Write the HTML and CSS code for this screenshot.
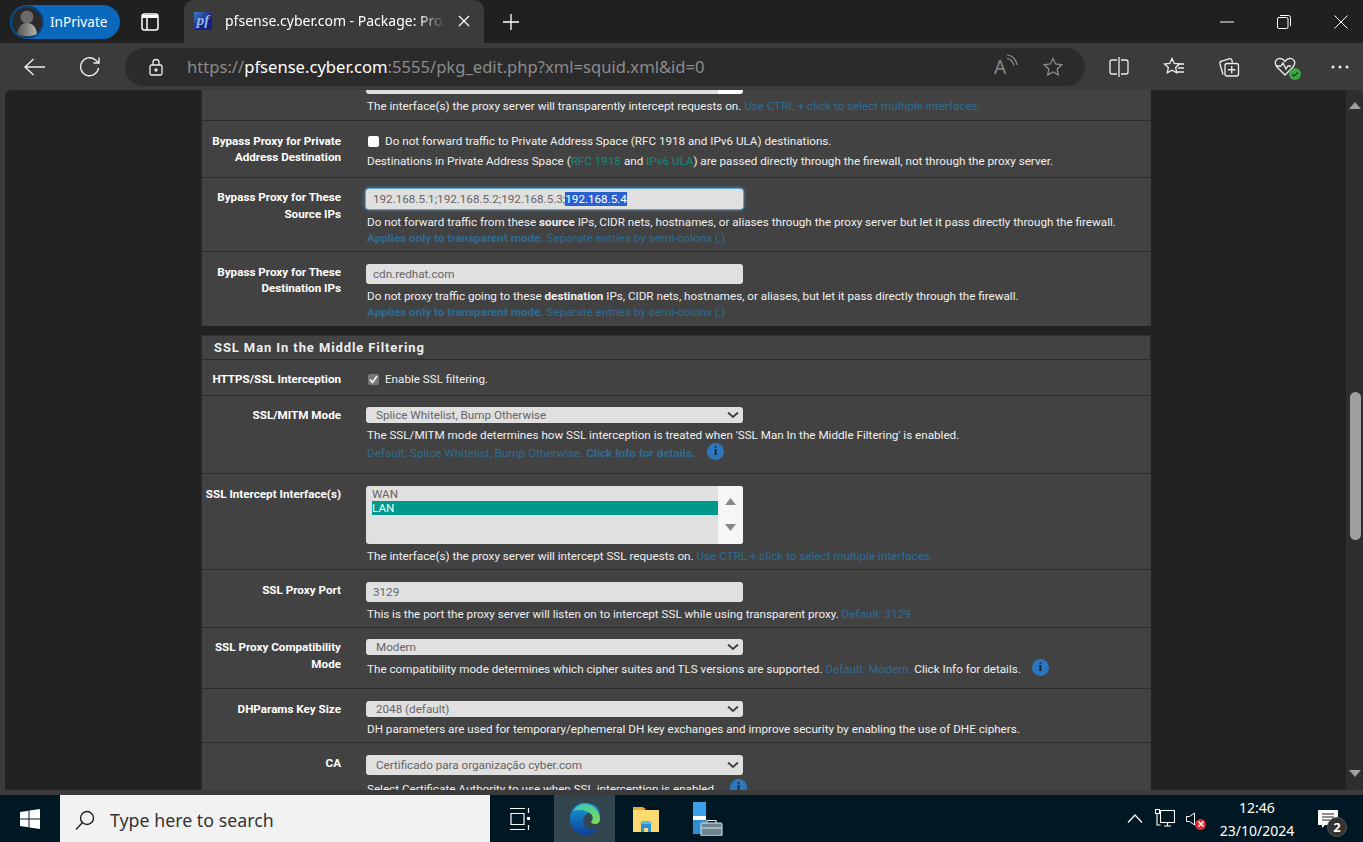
FILE: index.html
```html
<!DOCTYPE html>
<html lang="en">
<head>
  <meta charset="UTF-8" />
  <title>pfsense.cyber.com - Package: Proxy Server</title>
  <link rel="stylesheet" href="styles.css">
</head>
<body>
  <!-- browser tab strip -->
  <div class="tabbar">
    <div class="profile">
      <svg class="avatar" width="34" height="34" viewBox="0 0 34 34">
        <defs>
          <linearGradient id="avatarBody" x1="0" y1="0" x2="1" y2="0"><stop offset="0" stop-color="#55534e"/><stop offset="1" stop-color="#b5b3ac"/></linearGradient>
        </defs>
        <circle cx="17" cy="17" r="15.5" fill="#2a2a2a" stroke="#0a3f70" stroke-width="2"/>
        <circle cx="17" cy="12" r="6.500" fill="#6a6a6a"/>
        <path d="M7 29c1-7 4-11 10-11s9 4 10 11c-6 3-14 3-20 0z" fill="url(#avatarBody)"/>
      </svg>
      <span>InPrivate</span>
    </div>
    <svg class="tabs-icon" width="18" height="18" viewBox="0 0 18 18" fill="none" stroke="#fff" stroke-width="1.5"><rect x="1" y="1" width="16" height="16" rx="2.5"/><path d="M6 5v12"/><path d="M1 2h16v3H1z" fill="#fff" stroke="none"/></svg>
    <div class="tab">
      <div class="favicon">pf</div>
      <span class="tab-title">pfsense.cyber.com - Package: Proxy Server</span>
      <svg width="12" height="12" viewBox="0 0 12 12" stroke="#fff" stroke-width="1.2"><path d="M1 1l10 10M11 1L1 11"/></svg>
    </div>
    <svg class="new-tab" width="18" height="18" viewBox="0 0 18 18" stroke="#fff" stroke-width="1.3"><path d="M9 1v16M1 9h16"/></svg>
    <div class="window-controls">
      <svg width="14" height="14" viewBox="0 0 14 14" stroke="#fff" stroke-width="1"><path d="M0 7h14"/></svg>
      <svg width="14" height="14" viewBox="0 0 14 14" fill="none" stroke="#fff" stroke-width="1"><rect x=".5" y="2.5" width="10.5" height="11" rx="1.5"/><path d="M3 .5h8.5a2 2 0 0 1 2 2V11"/></svg>
      <svg width="14" height="14" viewBox="0 0 14 14" stroke="#fff" stroke-width="1"><path d="M.5.5l13 13M13.5.5l-13 13"/></svg>
    </div>
  </div>

  <!-- address bar -->
  <div class="toolbar">
    <svg class="nav-back" width="22" height="18" viewBox="0 0 22 18" fill="none" stroke="#eee" stroke-width="1.4"><path d="M21 9H1M9.5 1L1 9l8.5 8"/></svg>
    <svg class="nav-reload" width="22" height="22" viewBox="0 0 22 22" fill="none" stroke="#eee" stroke-width="1.4"><path d="M19.5 12a9 9 0 1 1-3-8L20 7"/><path d="M20 1.5V7h-5.5"/></svg>
    <div class="address">
      <svg width="14" height="18" viewBox="0 0 14 18" fill="none" stroke="#eee" stroke-width="1.3"><rect x="1" y="7" width="12" height="10" rx="1.5"/><path d="M4 7V4.5a3 3 0 0 1 6 0V7"/><circle cx="7" cy="12" r="1" fill="#eee"/></svg>
      <div class="url">https://<b>pfsense.cyber.com</b>:5555/pkg_edit.php?xml=squid.xml&amp;id=0</div>
      <div class="read-aloud">A<svg width="12" height="14" viewBox="0 0 12 14" fill="none" stroke="#8a8a8a" stroke-width="1.2"><path d="M1 1c5 0 9 4 10 10M1 4.500c3 0 6 3 7 7"/></svg></div>
      <svg width="20" height="20" viewBox="0 0 20 20" fill="none" stroke="#8a8a8a" stroke-width="1.3"><path d="M10 1.500l2.600 5.500 6 .8-4.400 4.100 1.100 6L10 15l-5.300 2.900 1.100-6L1.400 7.800l6-.8z"/></svg>
    </div>
    <div class="tools">
      <svg width="20" height="20" viewBox="0 0 20 20" fill="none" stroke="#eee" stroke-width="1.3"><path d="M8 3H3a2 2 0 0 0-2 2v10a2 2 0 0 0 2 2h5M12 3h5a2 2 0 0 1 2 2v10a2 2 0 0 1-2 2h-5M10 0v20"/></svg>
      <svg width="22" height="20" viewBox="0 0 22 20" fill="none" stroke="#eee" stroke-width="1.3"><path d="M9 1.500l2.300 5 5.200.6-3.800 3.500 1 5.200L9 13.300l-4.700 2.500 1-5.200L1.500 7.100l5.200-.6z"/><path d="M15 7h6M15 11h6M13 15h8"/></svg>
      <svg width="22" height="20" viewBox="0 0 22 20" fill="none" stroke="#eee" stroke-width="1.3"><path d="M5 17.500L2 7a2.500 2.500 0 0 1 1.800-3L11 1.800a2.500 2.500 0 0 1 3 1.700l.5 2"/><rect x="7" y="6.500" width="13.500" height="12.500" rx="2"/><path d="M13.750 9v7.500M10 12.750h7.500"/></svg>
      <div class="health">
        <svg width="22" height="20" viewBox="0 0 22 20" fill="none" stroke="#eee" stroke-width="1.3"><path d="M11 18L3 10C-1 5 3 1 6.500 1.500 9 1.800 10 3 11 4.500 12 3 13 1.800 15.500 1.500 19 1 23 5 19 10z"/><path d="M2 9h5l2-3 3 6 2-3h3"/></svg>
        <svg class="health-ok" width="12" height="12" viewBox="0 0 12 12"><circle cx="6" cy="6" r="6" fill="#3fa648"/><path d="M3 6.200l2 2 4-4" fill="none" stroke="#1d3a20" stroke-width="1.300"/></svg>
      </div>
      <svg width="18" height="4" viewBox="0 0 18 4" fill="#eee"><circle cx="2" cy="2" r="1.500"/><circle cx="9" cy="2" r="1.500"/><circle cx="16" cy="2" r="1.500"/></svg>
    </div>
  </div>

  <!-- page content -->
  <div class="viewport">
    <div class="page">
      <div class="panel">
        <div class="row row-top">
          <div class="label"></div>
          <div class="field">
            <div class="list-stub"></div>
            <p class="help">The interface(s) the proxy server will transparently intercept requests on. <span class="muted">Use CTRL + click to select multiple interfaces.</span></p>
          </div>
        </div>
        <div class="row row-private">
          <div class="label">Bypass Proxy for Private Address Destination</div>
          <div class="field">
            <label class="check"><span class="box"></span>Do not forward traffic to Private Address Space (RFC 1918 and IPv6 ULA) destinations.</label>
            <p class="help">Destinations in Private Address Space (<span class="teal">RFC 1918</span> and <span class="teal">IPv6 ULA</span>) are passed directly through the firewall, not through the proxy server.</p>
          </div>
        </div>
        <div class="row row-source">
          <div class="label">Bypass Proxy for These Source IPs</div>
          <div class="field">
            <div class="input focused">192.168.5.1;192.168.5.2;192.168.5.3;<span class="selected">192.168.5.4</span></div>
            <p class="help">Do not forward traffic from these <b>source</b> IPs, CIDR nets, hostnames, or aliases through the proxy server but let it pass directly through the firewall.<br><span class="muted"><b>Applies only to transparent mode.</b> Separate entries by semi-colons (;)</span></p>
          </div>
        </div>
        <div class="row row-dest">
          <div class="label">Bypass Proxy for These Destination IPs</div>
          <div class="field">
            <div class="input">cdn.redhat.com</div>
            <p class="help">Do not proxy traffic going to these <b>destination</b> IPs, CIDR nets, hostnames, or aliases, but let it pass directly through the firewall.<br><span class="muted"><b>Applies only to transparent mode.</b> Separate entries by semi-colons (;)</span></p>
          </div>
        </div>
      </div>

      <div class="panel panel-ssl">
        <h2>SSL Man In the Middle Filtering</h2>
        <div class="row row-https">
          <div class="label">HTTPS/SSL Interception</div>
          <div class="field">
            <label class="check"><span class="box checked"><svg width="9" height="9" viewBox="0 0 9 9" fill="none" stroke="#fff" stroke-width="1.500"><path d="M1 4.500l2.500 3L8 1"/></svg></span>Enable SSL filtering.</label>
          </div>
        </div>
        <div class="row row-mode">
          <div class="label">SSL/MITM Mode</div>
          <div class="field">
            <div class="select">Splice Whitelist, Bump Otherwise<svg width="12" height="8" viewBox="0 0 12 8" fill="none" stroke="#444" stroke-width="2"><path d="M1 1.500l5 4.500 5-4.500"/></svg></div>
            <p class="help">The SSL/MITM mode determines how SSL interception is treated when 'SSL Man In the Middle Filtering' is enabled.<br><span class="muted">Default: Splice Whitelist, Bump Otherwise. <b>Click Info for details.</b></span><span class="info info-mode">i</span></p>
          </div>
        </div>
        <div class="row row-iface">
          <div class="label">SSL Intercept Interface(s)</div>
          <div class="field">
            <div class="listbox">
              <div class="options">
                <div>WAN</div>
                <div class="picked">LAN</div>
              </div>
              <div class="list-scroll">
                <svg width="11" height="7" viewBox="0 0 11 7" fill="#888"><path d="M5.500 0l5.500 7H0z"/></svg>
                <svg width="11" height="7" viewBox="0 0 11 7" fill="#888"><path d="M5.500 7L0 0h11z"/></svg>
              </div>
            </div>
            <p class="help">The interface(s) the proxy server will intercept SSL requests on. <span class="muted">Use CTRL + click to select multiple interfaces.</span></p>
          </div>
        </div>
        <div class="row row-port">
          <div class="label">SSL Proxy Port</div>
          <div class="field">
            <div class="input">3129</div>
            <p class="help">This is the port the proxy server will listen on to intercept SSL while using transparent proxy. <span class="muted">Default: 3129</span></p>
          </div>
        </div>
        <div class="row row-compat">
          <div class="label">SSL Proxy Compatibility Mode</div>
          <div class="field">
            <div class="select">Modern<svg width="12" height="8" viewBox="0 0 12 8" fill="none" stroke="#444" stroke-width="2"><path d="M1 1.500l5 4.500 5-4.500"/></svg></div>
            <p class="help">The compatibility mode determines which cipher suites and TLS versions are supported. <span class="muted">Default: Modern.</span> Click Info for details.<span class="info info-compat">i</span></p>
          </div>
        </div>
        <div class="row row-dh">
          <div class="label">DHParams Key Size</div>
          <div class="field">
            <div class="select">2048 (default)<svg width="12" height="8" viewBox="0 0 12 8" fill="none" stroke="#444" stroke-width="2"><path d="M1 1.500l5 4.500 5-4.500"/></svg></div>
            <p class="help">DH parameters are used for temporary/ephemeral DH key exchanges and improve security by enabling the use of DHE ciphers.</p>
          </div>
        </div>
        <div class="row row-ca">
          <div class="label">CA</div>
          <div class="field">
            <div class="select select-tall">Certificado para organização cyber.com<svg width="12" height="8" viewBox="0 0 12 8" fill="none" stroke="#444" stroke-width="2"><path d="M1 1.500l5 4.500 5-4.500"/></svg></div>
            <p class="help">Select Certificate Authority to use when SSL interception is enabled.<span class="info info-ca">i</span></p>
          </div>
        </div>
      </div>
    </div>

    <div class="scrollbar">
      <svg class="arrow-up" width="12" height="7" viewBox="0 0 12 7" fill="#9f9f9f"><path d="M6 0l6 7H0z"/></svg>
      <div class="thumb"></div>
      <svg class="arrow-down" width="12" height="7" viewBox="0 0 12 7" fill="#9f9f9f"><path d="M6 7L0 0h12z"/></svg>
    </div>
  </div>
  <div class="strip"></div>

  <!-- windows taskbar -->
  <div class="taskbar">
    <div class="start">
      <svg width="20" height="20" viewBox="0 0 20 20" fill="#fff"><path d="M0 3l8.500-1.200v7.700H0zM9.500 1.600L20 0v9.500H9.500zM0 10.500h8.500v7.700L0 17zM9.500 10.500H20V20L9.500 18.400z"/></svg>
    </div>
    <div class="search">
      <svg width="20" height="20" viewBox="0 0 20 20" fill="none" stroke="#222" stroke-width="1.400"><circle cx="12" cy="8" r="6.500"/><path d="M7.500 12.500L1 19.500"/></svg>
      <span>Type here to search</span>
    </div>
    <div class="task task-view">
      <svg width="20" height="26" viewBox="0 0 20 26" fill="none" stroke="#fff" stroke-width="1.200"><path d="M0 2.500h15M0 23.500h15M1 7.500h13v11H1zM18.500 2v5M18.500 19v5"/><path d="M18.500 11v3" stroke-width="3"/></svg>
    </div>
    <div class="task task-edge">
      <svg width="32" height="34" viewBox="0 0 32 34">
        <defs>
          <linearGradient id="edgeBlue" x1="0" y1="0" x2="0" y2="1"><stop offset="0" stop-color="#1aa0d8"/><stop offset="1" stop-color="#0b3f9a"/></linearGradient>
          <linearGradient id="edgeGreen" x1="0" y1="0" x2="1" y2="1"><stop offset="0" stop-color="#35c6c0"/><stop offset="1" stop-color="#7fdc55"/></linearGradient>
        </defs>
        <path d="M16 1C7 1 1 8 1 17c0 9 7 16 15 16 6 0 11-3 14-7-5 3-13 2-15-4-2-5 0-9 5-11 5-1 9 2 11 5 1-10-6-15-15-15z" fill="url(#edgeBlue)"/>
        <path d="M4 9c4-7 13-9 19-5 5 3 8 8 8 13 0 3-2 5-5 5-2 0-4-1-4-2 3-3 2-8-3-10C13 7 7 8 4 9z" fill="url(#edgeGreen)"/>
      </svg>
    </div>
    <div class="task task-files">
      <svg width="28" height="28" viewBox="0 0 28 28"><path d="M1 2h10l3 4h-13z" fill="#e8a93a"/><path d="M1 5h26v22H1z" fill="#fcd971"/><path d="M1 5h11l2-2" fill="#e8a93a"/><path d="M9 27v-8h10v8h-3v-4h-4v4z" fill="#2f8fd0"/><path d="M8 19l2-3h8l2 3z" fill="#5fb6e8"/></svg>
    </div>
    <div class="task task-admin">
      <svg width="31" height="34" viewBox="0 0 31 34"><rect x="1" y="0" width="13" height="14" fill="#3aa0e8"/><rect x="1" y="14" width="13" height="4" fill="#fff"/><rect x="1" y="18" width="13" height="14" fill="#2f8fd0"/><rect x="9" y="21" width="21" height="13" rx="1" fill="#6f8692" stroke="#dfe7ec"/><path d="M15 21v-2.500h9V21" fill="none" stroke="#dfe7ec" stroke-width="1.200"/><path d="M10 26h19" stroke="#dfe7ec"/></svg>
    </div>
    <div class="tray">
      <svg width="16" height="9" viewBox="0 0 16 9" fill="none" stroke="#fff" stroke-width="1.200"><path d="M1 8.500L8 1l7 7.500"/></svg>
      <svg class="tray-net" width="20" height="20" viewBox="0 0 20 20" fill="none" stroke="#fff" stroke-width="1.100"><rect x="5.500" y="1.500" width="14" height="12"/><path d="M9 17h7M12.500 13.500V17M2 3.500V16h3.500"/><rect x=".5" y=".5" width="4" height="4" fill="#001823"/></svg>
      <div class="volume">
        <svg width="10" height="14" viewBox="0 0 10 14" fill="none" stroke="#fff" stroke-width="1"><path d="M.5 4.500h3L8.500 1v12l-5-3.500h-3z"/></svg>
        <span class="mute-x">
          <svg width="10" height="10" viewBox="0 0 10 10" stroke="#fff" stroke-width="1.500"><path d="M2.500 2.500l5 5M7.500 2.500l-5 5"/></svg>
        </span>
      </div>
      <div class="clock"><div>12:46</div><div>23/10/2024</div></div>
      <div class="notify">
        <svg width="20" height="18" viewBox="0 0 20 18" fill="#fff"><path d="M0 0h20v15H7l-3 3v-3H0z"/><path d="M4 4h12M4 7h12M4 10h8" stroke="#222" stroke-width="1"/></svg>
        <span class="badge">2</span>
      </div>
    </div>
  </div>
</body>
</html>
```

FILE: styles.css
```css
* {
  box-sizing: border-box;
}

html, body {
  margin: 0;
  height: 100%;
  overflow: hidden;
}

body {
  display: flex;
  flex-direction: column;
  height: 100vh;
  background: #3b3b3b;
  font-family: Roboto, "Liberation Sans", sans-serif;
  font-size: 11.66px;
  color: #f0f0f0;
}

/* tab strip */
.tabbar {
  height: 43px;
  flex: none;
  display: flex;
  align-items: center;
  background: #202020;
  color: #fff;
  font-family: "Noto Sans", sans-serif;
}

.profile {
  width: 110px;
  height: 34px;
  margin-left: 10px;
  display: flex;
  align-items: center;
  gap: 6px;
  background: #0a68bd;
  border-radius: 17px;
  font-size: 13.6px;
}

.tabs-icon {
  margin-left: 21px;
}

.tab {
  width: 300px;
  height: 43px;
  margin: 0 0 0 25px;
  padding: 0 14px 2px 10px;
  display: flex;
  align-items: center;
  gap: 13px;
  background: #3b3b3b;
  border-radius: 10px 10px 0 0;
  font-size: 14px;
}

.favicon {
  width: 18px;
  height: 18px;
  flex: none;
  background: linear-gradient(135deg, #3f7fc0, #1a1f80 60%);
  color: #8fb8e8;
  font: italic bold 15px/16px "Liberation Serif", serif;
  text-align: center;
}

.tab-title {
  flex: 1;
  white-space: nowrap;
  overflow: hidden;
  -webkit-mask-image: linear-gradient(to right, #000 88%, transparent);
  mask-image: linear-gradient(to right, #000 88%, transparent);
}

.new-tab {
  margin-left: 18px;
}

.window-controls {
  margin-left: auto;
  display: flex;
  gap: 43px;
  padding-right: 15px;
}

/* address bar */
.toolbar {
  height: 47px;
  flex: none;
  display: flex;
  align-items: center;
  background: #3b3b3b;
}

.nav-back {
  margin-left: 24px;
}

.nav-reload {
  margin-left: 33px;
}

.address {
  width: 960px;
  height: 38px;
  margin-left: 24px;
  padding: 0 22px 0 24px;
  display: flex;
  align-items: center;
  background: #2b2b2b;
  border-radius: 19px;
}

.url {
  flex: 1;
  margin-left: 24px;
  font-family: "Noto Sans", sans-serif;
  font-size: 16.6px;
  color: #8c8c8c;
  white-space: nowrap;
}

.url b {
  font-weight: 400;
  color: #fff;
}

.read-aloud {
  width: 28px;
  margin-right: 21px;
  display: flex;
  font: 400 19px "Noto Sans", sans-serif;
  color: #8a8a8a;
}

.tools {
  flex: 1;
  display: flex;
  align-items: center;
  padding: 0 14px 0 24px;
  justify-content: space-between;
}

.health {
  position: relative;
  display: flex;
  margin-right: 2px;
}

.health-ok {
  position: absolute;
  right: -5px;
  bottom: -3px;
}

/* page */
.viewport {
  flex: 1;
  min-height: 0;
  margin-left: 5px;
  display: flex;
  background: #222;
  border-radius: 6px 6px 0 0;
  overflow: hidden;
}

.page {
  flex: 1;
  overflow: hidden;
  padding-left: 196px;
  padding-right: 195px;
}

.panel {
  background: #424242;
}

.panel-ssl {
  margin-top: 9px;
}

.panel h2 {
  margin: 0;
  height: 25px;
  padding-left: 12px;
  border: 1px solid #2b2b2b;
  border-top-color: #333;
  font-size: 13px;
  line-height: 24px;
  font-weight: 700;
  letter-spacing: 0.9px;
  color: #eee;
}

.row {
  display: grid;
  grid-template-columns: 139px 1fr;
  column-gap: 25px;
  padding-top: 11px;
  border-bottom: 1px solid #2b2b2b;
  border-left: 1px solid #2b2b2b;
}

.row-top { height: 31px; padding-top: 0; }
.row-private { height: 57px; padding-top: 12px; }
.row-source { height: 74px; }
.row-dest { height: 74px; padding-top: 12px; border-bottom: 0; }
.row-https { height: 36px; }
.row-mode { height: 78px; }
.row-iface { height: 96px; padding-top: 12px; }
.row-port { height: 58px; padding-top: 12px; }
.row-compat { height: 61px; }
.row-dh { height: 54px; padding-top: 12px; }
.row-ca { height: 60px; padding-top: 12px; border-bottom: 0; }

.label {
  font-weight: 700;
  line-height: 16px;
  text-align: right;
  color: #fff;
}

.row-source .label,
.row-compat .label {
  line-height: 17px;
}

.help {
  margin: 4px 0 0;
  padding-left: 1px;
  line-height: 16px;
  white-space: nowrap;
}

.row-source .help {
  margin-top: 5px;
}

.muted {
  color: #2e6d94;
}

.teal {
  color: #0f8a7c;
}

.check {
  display: flex;
  align-items: center;
  gap: 6px;
  line-height: 16px;
}

.box {
  width: 11px;
  height: 11px;
  margin-left: 2px;
  display: flex;
  align-items: center;
  justify-content: center;
  background: #fff;
  border-radius: 2px;
}

.box.checked {
  background: #777;
}

.input, .select, .listbox, .list-stub {
  width: 377px;
  background: #e0e0e0;
  border-radius: 3px;
  color: #666;
}

.input {
  height: 20px;
  padding-left: 7px;
  line-height: 20px;
}

.focused {
  box-shadow: 0 0 0 1px #5da5d8, 0 0 5px #5da5d8;
}

.selected {
  background: #2a5fd0;
  color: #fff;
}

.select {
  height: 16px;
  padding: 0 4px 0 10px;
  display: flex;
  align-items: center;
  justify-content: space-between;
}

.select-tall {
  height: 20px;
}

.list-stub {
  height: 4px;
  border-radius: 0 0 3px 3px;
  background: linear-gradient(to right, #e0e0e0 352px, #fff 352px);
}

.listbox {
  height: 58px;
  display: flex;
  overflow: hidden;
  line-height: 14px;
}

.options {
  flex: 1;
  padding: 1px 0 0 6px;
}

.picked {
  background: #00988a;
  color: #fff;
}

.list-scroll {
  width: 25px;
  padding: 12px 0 13px;
  display: flex;
  flex-direction: column;
  align-items: center;
  justify-content: space-between;
  background: #f6f6f6;
}

.info {
  display: inline-block;
  width: 17px;
  height: 17px;
  vertical-align: 2px;
  border-radius: 50%;
  background: #2a77c0;
  color: #222;
  font: 700 12px/17px "Liberation Serif", serif;
  text-align: center;
}

.info-mode { margin-left: 12px; }
.info-compat { margin-left: 11px; }
.info-ca { margin-left: 13px; }

/* browser scrollbar */
.scrollbar {
  position: relative;
  width: 17px;
  flex: none;
  background: #2e2e2e;
}

.arrow-up {
  position: absolute;
  top: 12px;
  left: 3px;
}

.arrow-down {
  position: absolute;
  bottom: 13px;
  left: 3px;
}

.thumb {
  position: absolute;
  top: 302px;
  left: 4px;
  width: 11px;
  height: 148px;
  background: #9f9f9f;
  border-radius: 6px;
}

.strip {
  height: 5px;
  flex: none;
  background: #3b3b3b;
}

/* taskbar */
.taskbar {
  height: 47px;
  flex: none;
  display: flex;
  align-items: center;
  background: #001823;
  color: #fff;
  font-family: "Noto Sans", sans-serif;
}

.start {
  width: 60px;
  flex: none;
  display: flex;
  justify-content: center;
}

.search {
  width: 430px;
  height: 47px;
  flex: none;
  padding: 2px 0 0 15px;
  display: flex;
  align-items: center;
  gap: 15px;
  background: #f2f2f2;
  color: #333;
  font-size: 17.8px;
}

.task {
  height: 47px;
  flex: none;
  display: flex;
  align-items: center;
  justify-content: center;
}

.task-view { width: 64px; padding-right: 4px; }
.task-edge { width: 61px; background: #33454f; }
.task-files { width: 61px; }
.task-admin { width: 62px; }

.tray {
  flex: 1;
  min-width: 0;
  height: 47px;
  display: flex;
  align-items: center;
  padding-left: 389px;
}

.tray-net {
  margin-left: 12px;
}

.volume {
  position: relative;
  display: flex;
  margin-left: 11px;
}

.mute-x {
  position: absolute;
  left: 9px;
  top: 7px;
  width: 11px;
  height: 11px;
  display: flex;
  align-items: center;
  justify-content: center;
  border-radius: 50%;
  background: #e2262e;
}

.clock {
  width: 90px;
  flex: none;
  margin-left: 16px;
  text-align: center;
  font-size: 14px;
  line-height: 23px;
}

.notify {
  position: relative;
  display: flex;
  margin-left: 16px;
}

.badge {
  position: absolute;
  right: -9px;
  bottom: -9px;
  width: 20px;
  height: 20px;
  border-radius: 50%;
  background: #333;
  border: 1px solid #555;
  color: #fff;
  font-size: 13px;
  font-weight: 700;
  line-height: 18px;
  text-align: center;
}
```
